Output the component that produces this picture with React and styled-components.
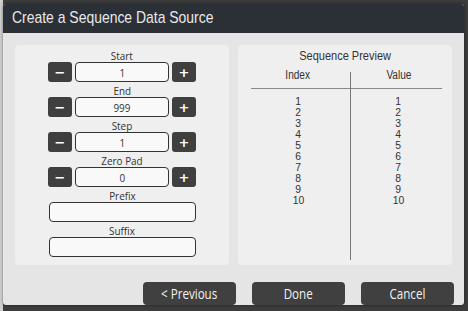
import React from 'react'
import styled, { createGlobalStyle } from 'styled-components'

const Global = createGlobalStyle`
  html, body {
    margin: 0;
    padding: 0;
    background: #3c3c3c;
  }
  * { box-sizing: border-box; }
`

const sans = '"Liberation Sans", Arial, sans-serif'

// the captured UI renders its text a bit narrow, so text runs are squeezed horizontally
const Squeeze = styled.span`
  display: inline-block;
  white-space: nowrap;
  transform: scaleX(${(p) => p.$x || 0.86});
  transform-origin: ${(p) => p.$origin || 'center'};
`

const Screen = styled.div`
  width: 468px;
  height: 311px;
  padding: 4px 4px 6px 3px;
  background: linear-gradient(to right, #cfcfcf 0 3px, #3c3c3c 3px);
  font-family: "Open Sans", "DejaVu Sans", sans-serif;
`

const Dialog = styled.div`
  height: 100%;
  display: flex;
  flex-direction: column;
  background: #e5e5e5;
  border-radius: 3px;
  overflow: hidden;
  box-shadow: 0 0 3px rgba(0, 0, 0, 0.5);
`

const TitleBar = styled.div`
  height: 29px;
  background: #2b2f36;
  color: #e8e8e8;
  font-family: ${sans};
  font-size: 17px;
  line-height: 20px;
  padding: 4px 0 0 9px;
`

const Body = styled.div`
  flex: 1;
  display: flex;
  gap: 9px;
  padding: 12px 12px 0 12px;
`

const Panel = styled.div`
  flex: 1;
  height: 220px;
  background: #efefef;
  border-radius: 4px;
`

const Controls = styled.div`
  display: flex;
  flex-direction: column;
  align-items: center;
  padding-top: 2px;
`

const Group = styled.div`
  display: flex;
  flex-direction: column;
  align-items: center;
  height: 35px;
`

const Label = styled.div`
  font-size: 11.5px;
  color: #333;
  height: 15px;
  line-height: 18px;
`

const Row = styled.div`
  display: flex;
  gap: 3px;
`

const StepButton = styled.div`
  width: 24px;
  height: 20px;
  background: #3f3f3f;
  color: #fff;
  border-radius: 3px;
  display: flex;
  align-items: center;
  justify-content: center;
  font-family: "DejaVu Sans", sans-serif;
  font-size: 13px;
  font-weight: bold;
`

const Field = styled.div`
  width: ${(p) => (p.$wide ? '147px' : '94px')};
  height: 20px;
  background: #f9f9f9;
  border: 1.5px solid #333;
  border-radius: 4px;
  display: flex;
  align-items: center;
  justify-content: center;
  font-size: 11.5px;
  color: #333;
`

const PreviewTitle = styled.div`
  text-align: center;
  font-family: ${sans};
  font-size: 12.5px;
  color: #333;
  padding-top: 4px;
  height: 27px;
`

const Table = styled.div`
  display: grid;
  grid-template-columns: 99px 92px;
  margin-left: 13px;
  font-family: ${sans};
  color: #333;
`

const Column = styled.div`
  display: flex;
  flex-direction: column;
  align-items: center;
  height: 188px;
  border-left: ${(p) => (p.$divided ? '1px solid #777' : 'none')};
`

const Head = styled.div`
  width: 100%;
  text-align: center;
  font-size: 12px;
  height: 17px;
  line-height: 6px;
  padding: ${(p) => (p.$divided ? '0 0 0 4px' : '0 5px 0 0')};
  border-bottom: 1px solid #888;
  margin-bottom: 7px;
`

const Cell = styled.div`
  font-size: 11.5px;
  line-height: 11px;
  margin: ${(p) => (p.$divided ? '0 0 0 4px' : '0 5px 0 0')};
`

const Footer = styled.div`
  display: flex;
  justify-content: flex-end;
  gap: 16px;
  padding: 14px 10px 0 0;
`

const Button = styled.div`
  width: 93px;
  height: 23px;
  background: #404040;
  color: #f2f2f2;
  border-radius: 4px;
  display: flex;
  align-items: center;
  justify-content: center;
  font-family: "Open Sans", sans-serif;
  font-size: 14.5px;
`

const numberFields = [
  { label: 'Start', value: '1' },
  { label: 'End', value: '999' },
  { label: 'Step', value: '1' },
  { label: 'Zero Pad', value: '0' },
]

const rows = [1, 2, 3, 4, 5, 6, 7, 8, 9, 10]

const PreviewColumn = ({ title, divided }) => (
  <Column $divided={divided}>
    <Head $divided={divided}><Squeeze $x={0.84}>{title}</Squeeze></Head>
    {rows.map((n) => (
      <Cell key={n} $divided={divided}><Squeeze $x={0.9}>{n}</Squeeze></Cell>
    ))}
  </Column>
)

const App = () => {
  return (
    <Screen>
      <Global />
      <Dialog>
        <TitleBar>
          <Squeeze $x={0.82} $origin="left">Create a Sequence Data Source</Squeeze>
        </TitleBar>
        <Body>
          <Panel>
            <Controls>
              {numberFields.map((f) => (
                <Group key={f.label}>
                  <Label><Squeeze>{f.label}</Squeeze></Label>
                  <Row>
                    <StepButton>&minus;</StepButton>
                    <Field><Squeeze>{f.value}</Squeeze></Field>
                    <StepButton>+</StepButton>
                  </Row>
                </Group>
              ))}
              <Group>
                <Label><Squeeze>Prefix</Squeeze></Label>
                <Field $wide />
              </Group>
              <Group>
                <Label><Squeeze>Suffix</Squeeze></Label>
                <Field $wide />
              </Group>
            </Controls>
          </Panel>
          <Panel>
            <PreviewTitle><Squeeze $x={0.88}>Sequence Preview</Squeeze></PreviewTitle>
            <Table>
              <PreviewColumn title="Index" />
              <PreviewColumn title="Value" divided />
            </Table>
          </Panel>
        </Body>
        <Footer>
          <Button><Squeeze $x={0.8}>&lt; Previous</Squeeze></Button>
          <Button><Squeeze $x={0.8}>Done</Squeeze></Button>
          <Button><Squeeze $x={0.8}>Cancel</Squeeze></Button>
        </Footer>
      </Dialog>
    </Screen>
  )
}

export default App
